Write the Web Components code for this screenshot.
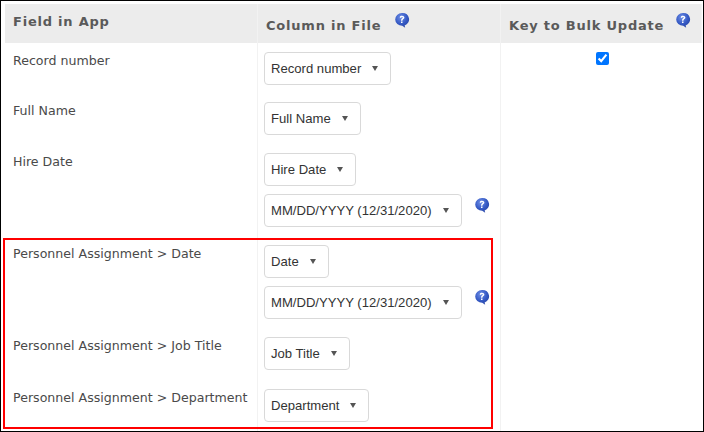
<!DOCTYPE html>
<html lang="en"><head><meta charset="utf-8"><title>Field mapping</title>
<style>
html,body{margin:0;padding:0;background:#fff}
body{width:704px;height:432px;overflow:hidden}
</style></head><body>
<map-frame>
  <map-head slot="h" style="--pt:10px">Field in App</map-head>
  <map-head slot="h" style="--pt:14px" help="395">Column in File</map-head>
  <map-head slot="h" style="--pt:14px" help="677">Key to Bulk Update</map-head>

  <map-row style="--h:50px" check><span slot="label">Record number</span><map-select>Record number</map-select></map-row>
  <map-row style="--h:51px"><span slot="label">Full Name</span><map-select>Full Name</map-select></map-row>
  <map-row style="--h:92px"><span slot="label">Hire Date</span><map-select>Hire Date</map-select><map-select help>MM/DD/YYYY (12/31/2020)</map-select></map-row>
  <map-row style="--h:92px"><span slot="label">Personnel Assignment &gt; Date</span><map-select>Date</map-select><map-select help>MM/DD/YYYY (12/31/2020)</map-select></map-row>
  <map-row style="--h:52px"><span slot="label">Personnel Assignment &gt; Job Title</span><map-select>Job Title</map-select></map-row>
  <map-row style="--h:52px"><span slot="label">Personnel Assignment &gt; Department</span><map-select>Department</map-select></map-row>
</map-frame>
<script>
const helpIcon = `<svg width="16" height="17" viewBox="0 0 16 17" aria-hidden="true" style="display:block">
<defs><radialGradient id="g" cx=".4" cy=".3" r=".8"><stop offset="0" stop-color="#6f8fe6"/><stop offset=".55" stop-color="#3559c4"/><stop offset="1" stop-color="#24409c"/></radialGradient></defs>
<path d="M8 1a6.900 6.400 0 0 1 2.600 12.400l.6 2.400-3-2a6.900 6.400 0 0 1-.2-12.800z" fill="url(#g)"/>
<path d="M5.700 5.400C6 4 7 3.700 8 3.700c1.400 0 2.400.8 2.400 1.900 0 1.700-2 1.500-2 3.100H7c0-2.200 1.800-2.100 1.800-3.100 0-.5-.4-.7-.8-.7-.5 0-.8.3-.9 1z" fill="#fff"/>
<rect x="7" y="9.500" width="1.500" height="1.500" fill="#fff"/></svg>`;

class MapFrame extends HTMLElement{constructor(){super();this.attachShadow({mode:'open'}).innerHTML=`<style>
:host{display:block;box-sizing:border-box;width:704px;height:432px;border:1px solid #000;padding:3px 1px 0 4px;position:relative;overflow:hidden;background:#fff}
.head{display:grid;grid-template-columns:253px 243px 1fr;height:39px;background:#ececec}
.red{position:absolute;left:2px;top:237px;width:490px;height:191px;box-sizing:border-box;border:2px solid #f00;pointer-events:none}
</style><div class="head"><slot name="h"></slot></div><slot></slot><div class="red"></div>`}}

class MapHead extends HTMLElement{constructor(){super();const h=this.getAttribute('help');this.attachShadow({mode:'open'}).innerHTML=`<style>
:host{display:block;box-sizing:border-box;position:relative;height:39px;padding:var(--pt) 8px 0;border-right:1px solid #f2f2f2;font:bold 13px/15px "DejaVu Sans",Verdana,sans-serif;letter-spacing:.78px;color:#5a5a5a;white-space:nowrap}
:host(:last-child){border-right:0}
.i{position:absolute;right:var(--ir,0);top:8px}
</style><slot></slot>${h?`<span class="i">${helpIcon}</span>`:''}`}
connectedCallback(){const h=this.getAttribute('help');if(h){this.style.setProperty('--ir',h==='395'?'90px':'10px')}}}

class MapRow extends HTMLElement{constructor(){super();const c=this.hasAttribute('check');this.attachShadow({mode:'open'}).innerHTML=`<style>
:host{display:grid;grid-template-columns:253px 243px 1fr;height:var(--h)}
.l{box-sizing:border-box;padding:9px 0 0 8px;border-right:1px solid #f2f2f2;font:12.6px/17px "DejaVu Sans",Verdana,sans-serif;color:#4a4a4a;white-space:nowrap}
.s{box-sizing:border-box;padding:9px 0 0 6px;border-right:1px solid #f2f2f2;display:flex;flex-direction:column;align-items:flex-start;gap:8px}
.k{display:flex;justify-content:center;padding-top:9px;align-items:flex-start}
input{margin:0;width:13px;height:13px;position:relative;left:1px}
</style><div class="l"><slot name="label"></slot></div><div class="s"><slot></slot></div><div class="k">${c?'<input type="checkbox" checked aria-label="Key to Bulk Update">':''}</div>`}}

class MapSelect extends HTMLElement{constructor(){super();const h=this.hasAttribute('help');this.attachShadow({mode:'open'}).innerHTML=`<style>
:host{display:flex;align-items:flex-start;gap:12px}
.b{box-sizing:border-box;height:33px;display:flex;align-items:center;gap:11px;padding:0 12px 0 6px;border:1px solid #d9d9d9;border-radius:4px;background:#fff;font:13.1px/1 "Liberation Sans",Arial,sans-serif;color:#333;white-space:nowrap}
.t{width:0;height:0;border-left:3.500px solid transparent;border-right:3.500px solid transparent;border-top:5px solid #555}
.i{margin-top:3px}
</style><div class="b"><slot></slot><span class="t"></span></div>${h?`<span class="i">${helpIcon}</span>`:''}`}}

customElements.define('map-frame',MapFrame);
customElements.define('map-head',MapHead);
customElements.define('map-row',MapRow);
customElements.define('map-select',MapSelect);
</script>
</body></html>
